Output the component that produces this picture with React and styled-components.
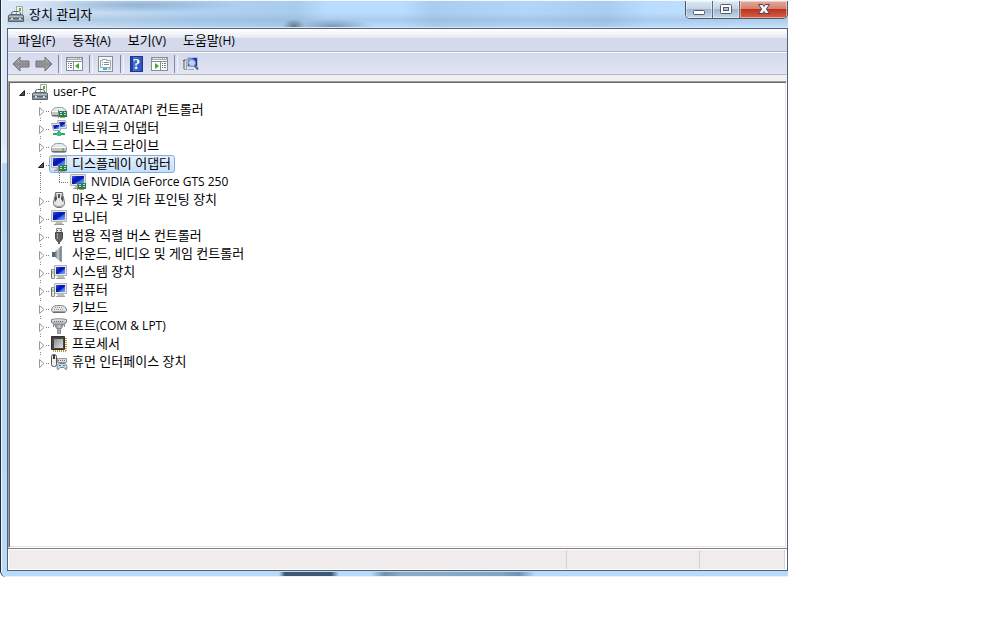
import React, { useState } from 'react';
import styled, { createGlobalStyle } from 'styled-components';

const MENUS = ['파일(F)', '동작(A)', '보기(V)', '도움말(H)'];

const DEVICES = [
    { id: 'ide', name: 'IDE ATA/ATAPI 컨트롤러', icon: 'ide' },
    { id: 'network', name: '네트워크 어댑터', icon: 'network' },
    { id: 'disk', name: '디스크 드라이브', icon: 'disk' },
    {
        id: 'display',
        name: '디스플레이 어댑터',
        icon: 'display',
        children: [{ id: 'gts250', name: 'NVIDIA GeForce GTS 250', icon: 'display' }],
    },
    { id: 'mouse', name: '마우스 및 기타 포인팅 장치', icon: 'mouse' },
    { id: 'monitor', name: '모니터', icon: 'monitor' },
    { id: 'usb', name: '범용 직렬 버스 컨트롤러', icon: 'usb' },
    { id: 'sound', name: '사운드, 비디오 및 게임 컨트롤러', icon: 'sound' },
    { id: 'system', name: '시스템 장치', icon: 'computer' },
    { id: 'computer', name: '컴퓨터', icon: 'computer' },
    { id: 'keyboard', name: '키보드', icon: 'keyboard' },
    { id: 'port', name: '포트(COM & LPT)', icon: 'port' },
    { id: 'cpu', name: '프로세서', icon: 'cpu' },
    { id: 'hid', name: '휴먼 인터페이스 장치', icon: 'hid' },
];

export default function App() {
    const [open, setOpen] = useState({ root: true, display: true });
    const [selected, setSelected] = useState('display');

    function toggle(id) {
        setOpen({ ...open, [id]: !open[id] });
    }

    return (
        <>
            <GlobalStyle />
            <Gradients />
            <Window>
                <TitleBar>
                    <DeviceIcon name="root" />
                    <h1>장치 관리자</h1>
                    <WindowButtons />
                </TitleBar>
                <Client>
                    <MenuBar>
                        {MENUS.map(menu => <button key={menu}><Text>{menu}</Text></button>)}
                    </MenuBar>
                    <Toolbar />
                    <TreePane>
                        <TreeList>
                            <li>
                                <Row>
                                    <Toggle open={open.root} onClick={() => toggle('root')} />
                                    <Item id="root" icon="root" name="user-PC" selected={selected} onSelect={setSelected} />
                                </Row>
                                {open.root && (
                                    <TreeList $nested>
                                        {DEVICES.map((device, i) => (
                                            <li key={device.id}>
                                                <Row>
                                                    <Toggle
                                                        open={open[device.id]}
                                                        line
                                                        last={i === DEVICES.length - 1}
                                                        onClick={() => toggle(device.id)}
                                                    />
                                                    <Item {...device} selected={selected} onSelect={setSelected} />
                                                </Row>
                                                {device.children && open[device.id] && (
                                                    <Branch>
                                                        <BranchLine />
                                                        <TreeList>
                                                            {device.children.map(child => (
                                                                <li key={child.id}>
                                                                    <Row>
                                                                        <Connector />
                                                                        <Item
                                                                            {...child}
                                                                            selected={selected}
                                                                            onSelect={setSelected}
                                                                        />
                                                                    </Row>
                                                                </li>
                                                            ))}
                                                        </TreeList>
                                                    </Branch>
                                                )}
                                            </li>
                                        ))}
                                    </TreeList>
                                )}
                            </li>
                        </TreeList>
                    </TreePane>
                    <StatusBar>
                        <div />
                        <div />
                        <div />
                    </StatusBar>
                </Client>
            </Window>
        </>
    );
}

function Item({ id, icon, name, selected, onSelect }) {
    return (
        <Label $selected={selected === id} onClick={() => onSelect(id)}>
            <DeviceIcon name={icon} />
            <Text>{name}</Text>
        </Label>
    );
}

// latin runs are set one size smaller than the hangul around them
function Text({ children }) {
    const parts = children.split(/([\x21-\x7e]+(?: [\x21-\x7e]+)*)/);

    return (
        <Caption>
            {parts.map((part, i) => i % 2 ? <Latin key={i}>{part}</Latin> : part)}
        </Caption>
    );
}

function WindowButtons() {
    return (
        <Controls>
            <ControlButton aria-label="최소화">
                <svg width="14" height="12" viewBox="0 0 14 12">
                    <rect x="1.5" y="6.5" width="11" height="4" rx="1" fill="#fff" stroke="#535a6b" />
                </svg>
            </ControlButton>
            <ControlButton aria-label="최대화">
                <svg width="14" height="12" viewBox="0 0 14 12">
                    <rect x="1.5" y=".5" width="11" height="9" rx="1" fill="#fff" stroke="#535a6b" />
                    <rect x="4.5" y="3.5" width="5" height="3" fill="#b6c6da" stroke="#535a6b" />
                </svg>
            </ControlButton>
            <ControlButton $close aria-label="닫기">
                <svg width="14" height="12" viewBox="0 0 14 12">
                    <path
                        d="M1.5.5h4L7 2.400 8.500.5h4L9.400 5l3.100 4.500h-4L7 7.600 5.500 9.500h-4L4.600 5z"
                        fill="#f4f4f6"
                        stroke="#4d4254"
                        strokeLinejoin="round"
                    />
                </svg>
            </ControlButton>
        </Controls>
    );
}

function Toolbar() {
    return (
        <ToolbarRow>
            <ToolButton aria-label="뒤로">
                <svg width="18" height="16" viewBox="0 0 18 16">
                    <path d="M1 8l7-7v4h9v6H8v4z" fill="url(#arrow)" stroke="#6f7072" strokeLinejoin="round" />
                </svg>
            </ToolButton>
            <ToolButton aria-label="앞으로">
                <svg width="18" height="16" viewBox="0 0 18 16">
                    <path d="M17 8l-7-7v4H1v6h9v4z" fill="url(#arrow)" stroke="#6f7072" strokeLinejoin="round" />
                </svg>
            </ToolButton>
            <Separator />
            <ToolButton aria-label="콘솔 트리 표시/숨기기">
                <PanelIcon />
            </ToolButton>
            <Separator />
            <ToolButton aria-label="속성">
                <svg width="16" height="16" viewBox="0 0 16 16">
                    <rect x=".5" y=".5" width="14" height="15" fill="#f4f4f4" stroke="#8f8f8f" />
                    <path d="M2.500 4.500h2v-1h4v1h4v7h-10z" fill="#fff" stroke="#9aa3ad" />
                    <path d="M4 6.500h1M4 8.500h1M6 6.500h5M6 8.500h5" stroke="#7c90a5" />
                    <path d="M5 13h4" stroke="#22c3ea" strokeWidth="2" />
                    <path d="M10 13h3" stroke="#c2c2c2" strokeWidth="2" />
                </svg>
            </ToolButton>
            <Separator />
            <ToolButton aria-label="도움말">
                <HelpMark>?</HelpMark>
            </ToolButton>
            <ToolButton aria-label="작업 창 표시/숨기기">
                <PanelIcon right />
            </ToolButton>
            <Separator />
            <ToolButton aria-label="하드웨어 변경 사항 검색">
                <svg width="17" height="16" viewBox="0 0 17 16">
                    <path d="M1.500 5v8" stroke="#9b9b9b" />
                    <rect x="2.500" y="3.500" width="2" height="10" fill="#e2e2e2" stroke="#a2a2a2" />
                    <path d="M1 4.500h2" stroke="#4a4a4a" />
                    <rect x="5.500" y="1.500" width="10" height="9" fill="#1434c8" stroke="#b8bcc4" />
                    <path d="M6 2h5L7 8H6z" fill="#6f92f2" />
                    <path d="M6 13.500h6" stroke="#a8a8a8" />
                    <circle cx="10" cy="7" r="3.500" fill="#d5ecfb" fillOpacity=".85" stroke="#6c8fae" />
                    <path d="M12.500 9.500l3.500 4" stroke="#5d6a7c" strokeWidth="2" />
                </svg>
            </ToolButton>
        </ToolbarRow>
    );
}

function PanelIcon({ right }) {
    return (
        <svg width="17" height="15" viewBox="0 0 17 15">
            <rect x=".5" y="1.5" width="16" height="13" fill="#fff" stroke="#8a8d91" />
            <path d="M1 3h15" stroke="#a9acb0" strokeWidth="2" />
            <path d="M2 2.5h9" stroke="#dfe1e4" />
            <path d="M12 2.5h1M14 2.5h1" stroke="#fff" />
            <path d="M1 5.5h15" stroke="#8a8d91" />
            {right ? (
                <>
                    <path d="M9.5 6v8" stroke="#8a8d91" />
                    <path d="M11 7.5h1M13 7.5h2M11 9.5h1M13 9.5h2M11 11.5h1M13 11.5h2" stroke="#66788c" />
                    <path d="M4 7v6l4-3z" fill="#43a52c" />
                </>
            ) : (
                <>
                    <path d="M7.5 6v8" stroke="#8a8d91" />
                    <path d="M2 7.5h1M4 7.5h2M2 9.5h1M4 9.5h2M2 11.5h1M4 11.5h2" stroke="#66788c" />
                    <path d="M13 7v6l-4-3z" fill="#43a52c" />
                </>
            )}
        </svg>
    );
}

function Toggle({ open, line, last, onClick }) {
    return (
        <ToggleButton onClick={onClick} aria-expanded={!!open} aria-label={open ? '축소' : '확장'}>
            <svg width="18" height="18" viewBox="0 0 18 18">
                {line && <path d={last ? 'M9.5 1v2' : 'M9.5 1v2M9.5 17v1'} stroke="#8b8b8b" strokeDasharray="1 1" />}
                <path d="M15 10.5h3" stroke="#7d7d7d" strokeDasharray="1 1" />
                {open
                    ? <path d="M12.5 7.5v5h-5z" fill="#505050" stroke="#262626" strokeLinejoin="round" />
                    : <path d="M8.500 6.500v8l4.500-4z" fill="#fff" stroke="#989898" />}
            </svg>
        </ToggleButton>
    );
}

function Connector() {
    return (
        <svg width="18" height="18" viewBox="0 0 18 18">
            <path d="M9.5 0v10M9 9.5h9" stroke="#7d7d7d" strokeDasharray="1 1" fill="none" />
        </svg>
    );
}

function Gradients() {
    return (
        <Defs aria-hidden="true">
            <defs>
                <linearGradient id="arrow" x1="0" y1="0" x2="0" y2="1">
                    <stop offset="0" stopColor="#c4c4c4" />
                    <stop offset=".5" stopColor="#8b8b8b" />
                    <stop offset="1" stopColor="#b5b5b5" />
                </linearGradient>
                <linearGradient id="screen" x1="0" y1="0" x2="1" y2="1">
                    <stop offset="0" stopColor="#3d5fe6" />
                    <stop offset=".3" stopColor="#0a1cc4" />
                    <stop offset=".55" stopColor="#0a18ae" />
                    <stop offset=".65" stopColor="#3a68e8" />
                    <stop offset="1" stopColor="#7fb0fa" />
                </linearGradient>
                <linearGradient id="metal" x1="0" y1="0" x2="0" y2="1">
                    <stop offset="0" stopColor="#f4f4f4" />
                    <stop offset="1" stopColor="#9c9c9c" />
                </linearGradient>
                <linearGradient id="chip" x1="0" y1="0" x2="1" y2="1">
                    <stop offset="0" stopColor="#8e8e8e" />
                    <stop offset="1" stopColor="#dedede" />
                </linearGradient>
                <linearGradient id="cone" x1="0" y1="0" x2="1" y2="0">
                    <stop offset="0" stopColor="#63707c" />
                    <stop offset=".5" stopColor="#c3ccd3" />
                    <stop offset="1" stopColor="#6d7984" />
                </linearGradient>
            </defs>
        </Defs>
    );
}

function Drive() {
    return (
        <>
            <path d="M1.500 10.500c1-2 3-4 5-4h5c2 0 4 2 5 4v3c0 1-1 2-2 2h-11c-1 0-2-1-2-2z" fill="#e9e9e9" stroke="#9b9b9b" />
            <path d="M2 10.500h14" stroke="#fff" />
            <path d="M2 11h14v3H2z" fill="#c4c4c4" />
            <path d="M2 14.500h14" stroke="#6b6b6b" />
            <path d="M12 12.500h2" stroke="#2fc437" strokeWidth="2" />
        </>
    );
}

function Screen() {
    return (
        <>
            <path d="M7 12h4l2 3H5z" fill="#b9b9b9" />
            <path d="M4 15.500h10" stroke="#999" />
            <path d="M1.500 1.500h15v11h-15z" fill="#e4e4e0" stroke="#b5b5b0" strokeLinejoin="round" />
            <path d="M3 3h12v8H3z" fill="url(#screen)" />
        </>
    );
}

function Card() {
    return (
        <>
            <path d="M9 10h8v6H9z" fill="#2b7d57" />
            <path d="M10 11.5h2M14 11.5h2M10 13.5h2M14 13.500h2" stroke="#b6e3c4" />
            <path d="M10 16.5h5" stroke="#c9a332" />
            <path d="M8.5 9v8" stroke="#7a8a80" />
        </>
    );
}

const drawings = {
    root: (
        <>
            <path d="M9.500 1.500h6v8h-6z" fill="#f3f3f3" stroke="#a5a5a5" />
            <path d="M12 3h2v3h-2z" fill="#54b03a" />
            <path d="M4.500 9c0-2 1-2.500 2-2.500h5c1 0 2 .500 2 2.500" fill="none" stroke="#5c666e" />
            <path d="M1.500 10.500l2-1h11l2 1v6h-15z" fill="#87929a" stroke="#58636b" strokeLinejoin="round" />
            <path d="M2 11.500h14" stroke="#b4bec5" />
            <path d="M2 13.500h14" stroke="#5b666e" />
            <path d="M4 13h2v2H4zM12 13h2v2h-2z" fill="#d2d7da" />
        </>
    ),
    ide: <><Drive /><Card /></>,
    disk: <Drive />,
    network: (
        <>
            <path d="M7.500 1.500h8l1 8h-8z" fill="#dfe3ea" stroke="#a9aeb8" />
            <path d="M9 3h6v5H9z" fill="url(#screen)" />
            <path d="M1.500 4.500h8l1 7h-7z" fill="#e6e9ee" stroke="#a9aeb8" />
            <path d="M3 6h6v4H4z" fill="url(#screen)" />
            <path d="M9 12v3M3 15h12" stroke="#2aa869" strokeWidth="2" />
            <path d="M7 13h4v4H7z" fill="#39bd7b" />
        </>
    ),
    display: <><Screen /><Card /></>,
    monitor: <Screen />,
    mouse: (
        <>
            <path d="M5.500 1.500h7c0 4 2 7 2 11-.500 3-2.500 4-5.500 4s-5-1-5.500-4c0-4 2-7 2-11z" fill="#e6e6e6" stroke="#6b6b6b" />
            <path d="M6 2l1 6-2 3c-1-3 1-6 1-9zM12 2l-1 6 2 3c1-3-1-6-1-9z" fill="#4a4a4a" />
            <path d="M9 3v4" stroke="#555" strokeWidth="2" />
            <path d="M5 14c2 2 6 2 8 0" stroke="#9b9b9b" fill="none" />
        </>
    ),
    usb: (
        <>
            <path d="M6.500 1.500h5v4h-5z" fill="#e1e1e1" stroke="#8b8b8b" />
            <path d="M7 3.500h1M10 3.500h1" stroke="#555" />
            <path d="M5.500 5.500h7v6l-2 3h-3l-2-3z" fill="#626262" stroke="#474747" />
            <path d="M7.500 6v6" stroke="#9c9c9c" />
            <path d="M9 14v3" stroke="#5d5d5d" strokeWidth="2" />
        </>
    ),
    sound: (
        <>
            <path d="M2 7h4v5H2z" fill="#596672" />
            <path d="M5 7l6-6v16l-6-5z" fill="url(#cone)" />
            <path d="M11.500 1v16" stroke="#8e989f" />
        </>
    ),
    computer: (
        <>
            <path d="M8 12h5l2 3H7z" fill="#bdbdbd" />
            <path d="M6 15.500h9" stroke="#a2a2a2" />
            <path d="M4.500 2.500h12v10h-12z" fill="#e8e8e8" stroke="#b3b3b3" />
            <path d="M6 4h9v7H6z" fill="url(#screen)" />
            <path d="M1.500 6.500h3v9h-3z" fill="#e2e6e2" stroke="#8f938f" />
            <path d="M3 8v3" stroke="#41c94a" />
            <path d="M1.500 7v8" stroke="#6b6f6b" />
        </>
    ),
    keyboard: (
        <>
            <path d="M1.500 11c0-3 3-4.500 5-4.500h5c2 0 5 1.500 5 4.500 0 1-1 2.500-2 2.500h-11c-1 0-2-1.500-2-2.500z" fill="#e2e2e2" stroke="#858585" />
            <path d="M5 8.500h8M4 10.500h10" stroke="#9a9a9a" strokeDasharray="1 1" />
            <path d="M3 13h12" stroke="#55555c" />
        </>
    ),
    port: (
        <>
            <path d="M1.500 2.500c5-1 10-1 15 0v3l-3 2h-9l-3-2z" fill="url(#metal)" stroke="#7c858b" strokeLinejoin="round" />
            <path d="M4 4.500h10" stroke="#5e666c" strokeDasharray="1 1" />
            <path d="M4.500 7.500h9l-2 4h-5z" fill="url(#cone)" stroke="#8a9399" />
            <path d="M3.500 7v3M14.500 7v3" stroke="#8a9399" />
            <path d="M7.500 11.500h3v5h-3z" fill="#aab1b6" stroke="#858d92" />
        </>
    ),
    cpu: (
        <>
            <path d="M16 3v13M3 16h13" stroke="#c7952e" strokeWidth="2" strokeDasharray="1 1" />
            <path d="M1.500 1.500h13v13h-13z" fill="#454545" stroke="#303030" />
            <path d="M4 4h9v9H4z" fill="url(#chip)" />
        </>
    ),
    hid: (
        <>
            <rect x="1.500" y="1.500" width="5" height="12" rx="2" fill="#eee" stroke="#555" />
            <path d="M4 2v4" stroke="#333" strokeWidth="2" />
            <path d="M7.500 5.500h9v4h-9z" fill="#d8d8d8" stroke="#999" />
            <path d="M8 7.500h8" stroke="#777" strokeDasharray="1 1" />
            <path d="M7.500 16.500c-1-3 0-6 2-6h5c2 0 3 3 2 6-2 0-2-2-3-2h-3c-1 0-1 2-3 2z" fill="#c6dbe6" stroke="#6d7f8a" />
            <path d="M9 12.500h2M13 12.500h2" stroke="#2a83c7" />
        </>
    ),
};

function DeviceIcon({ name }) {
    return (
        <svg width="18" height="18" viewBox="0 0 18 18" aria-hidden="true">
            {drawings[name]}
        </svg>
    );
}

const GlobalStyle = createGlobalStyle`
    * {
        box-sizing: border-box;
    }

    body {
        margin: 0;
        background: #fff;
        color: #000;
        font-family: 'Open Sans', 'Noto Sans CJK KR', sans-serif;
        font-size: 13px;
    }

    button {
        margin: 0;
        padding: 0;
        border: none;
        background: none;
        color: inherit;
        font: inherit;
    }

    svg {
        display: block;
        flex: none;
    }
`

const Caption = styled.span`
    padding-bottom: 2px;
`

const Latin = styled.span`
    font-size: 12px;
`

const Defs = styled.svg`
    position: absolute;
    width: 0;
    height: 0;
`

/* glass frame, with the blurred page behind it showing through the edges */
const Window = styled.div`
    display: flex;
    flex-direction: column;
    min-height: calc(100vh - 53px);
    margin-right: 220px;
    padding: 0 0 6px 6px;
    border-left: 1px solid #232a35;
    border-bottom-left-radius: 6px;
    background:
        linear-gradient(#e6f2fd, #e6f2fd) left bottom / 100% 1px no-repeat,
        linear-gradient(90deg, transparent 278px, #3d5872 284px, #3d5872 330px, transparent 338px) left bottom / 100% 5px no-repeat,
        linear-gradient(90deg, transparent 370px, #6d8faa 384px, #8cacc9 400px, #83a5c4 500px, #6f92b3 518px, transparent 534px) left bottom / 100% 5px no-repeat,
        linear-gradient(90deg, #f3f8fe 1px, transparent 1px),
        linear-gradient(180deg, #d9e9fa 140px, #e4f0fc 162px, #b4d6f9 164px, #b8dafb 560px, #b8dafb);
`

const TitleBar = styled.header`
    display: flex;
    align-items: center;
    gap: 4px;
    height: 28px;
    border-top: 1px solid #f2f8fe;
    border-bottom: 1px solid #d3e8fb;
    background:
        radial-gradient(ellipse 11px 7px at 287px 25px, #5f7b88, transparent),
        radial-gradient(ellipse 40px 7px at 326px 25px, #7d9ab8, transparent),
        radial-gradient(ellipse 100px 8px at 130px 4px, rgba(110, 143, 178, 0.5), transparent),
        linear-gradient(180deg, transparent 12px, rgba(130, 160, 190, 0.3) 19px, transparent 26px),
        linear-gradient(90deg, #dbe8f5, #c8def4 80px, #b1d2f2 180px, #a9cbec 290px, #badcff 320px, #badcff 395px, #aacdef 425px, #b2d5f8 520px, #a9ccef 600px, #badcff 640px, #c4e0fa);

    h1 {
        flex: 1;
        margin: 0;
        font-size: 13px;
        font-weight: 400;
        line-height: 20px;
    }
`

const Controls = styled.div`
    display: flex;
    align-self: flex-start;
    height: 18px;
    border: 1px solid #4d5868;
    border-top: none;
    border-radius: 0 0 5px 5px;
    overflow: hidden;
`

const ControlButton = styled.button`
    display: flex;
    align-items: center;
    justify-content: center;
    width: ${props => props.$close ? '47px' : '27px'};
    border-right: ${props => props.$close ? 'none' : '1px solid #5f6b7c'};
    background: ${props => props.$close
        ? 'linear-gradient(180deg, #e5a99c 0, #d4806f 8px, #bb3219 8px, #d6604a 17px)'
        : 'linear-gradient(180deg, #dce7f3 0, #c4d3e4 8px, #9fb4cc 8px, #c3d8ee 17px)'};
    box-shadow: inset 0 0 0 1px rgba(255, 255, 255, 0.45);
`

const Client = styled.main`
    display: flex;
    flex: 1;
    flex-direction: column;
    border: 1px solid #566072;
    background: #f0f0f0;
`

const MenuBar = styled.nav`
    display: flex;
    gap: 1px;
    height: 23px;
    padding-left: 2px;
    border-bottom: 1px solid #b1b5c8;
    background: linear-gradient(180deg, #fff 0, #e6eaf4 9px, #d4d9ec 9px);

    button {
        padding: 0 8px;
        line-height: 22px;
    }
`

const ToolbarRow = styled.div`
    display: flex;
    align-items: center;
    height: 23px;
    padding-left: 1px;
    border-top: 1px solid #fafbfe;
    border-bottom: 1px solid #b4b9cf;
    background: linear-gradient(180deg, #d4d9ec, #e1e5f4);
`

const ToolButton = styled.button`
    display: flex;
    align-items: center;
    justify-content: center;
    width: 23px;
    height: 21px;
`

const Separator = styled.span`
    width: 8px;
    height: 18px;
    padding-left: 3px;

    &::before {
        content: '';
        display: block;
        width: 2px;
        height: 100%;
        border-left: 1px solid #858a99;
        border-right: 1px solid #f2f4fa;
    }
`

const HelpMark = styled.span`
    width: 13px;
    height: 16px;
    border: 1px solid #1c3a94;
    background: linear-gradient(90deg, #24419f 2px, #4a72d8 2px, #2c50bd);
    color: #fff;
    font-family: 'Liberation Serif', serif;
    font-size: 15px;
    font-weight: 700;
    line-height: 14px;
`

const TreePane = styled.section`
    flex: 1;
    margin-top: 6px;
    padding: 1px 1px 1px 3px;
    border: 1px solid;
    border-color: #a0a0a0 #fff #fff #a0a0a0;
    background: #fff;
    box-shadow: inset 1px 1px 0 #696969, inset -1px -1px 0 #e3e3e3;
`

const TreeList = styled.ul`
    margin: 0;
    padding: 0 0 0 ${props => props.$nested ? '19px' : '0'};
    list-style: none;
`

const Row = styled.div`
    display: flex;
    height: 18px;
`

const Branch = styled.div`
    display: flex;
`

const BranchLine = styled.span`
    width: 19px;
    padding-left: 9px;

    &::before {
        content: '';
        display: block;
        width: 1px;
        height: 100%;
        background: repeating-linear-gradient(180deg, #7d7d7d 0 1px, transparent 1px 2px);
    }
`

const ToggleButton = styled.button`
    width: 18px;
    height: 18px;
`

const Label = styled.button`
    display: flex;
    align-items: center;
    gap: 4px;
    height: 18px;
    padding-right: 3px;
    border: 1px solid ${props => props.$selected ? '#84acdd' : 'transparent'};
    border-radius: 3px;
    background: ${props => props.$selected ? 'linear-gradient(180deg, #e6f1fd, #c4dffb)' : 'none'};
    line-height: 16px;
    white-space: nowrap;
`

const StatusBar = styled.footer`
    display: grid;
    grid-template-columns: 1fr 133px 85px;
    height: 22px;
    padding: 1px 2px 1px 1px;
    border-top: 1px solid #7e7e82;
    background: #fff;

    div {
        border-right: 1px solid #d0d2d4;
        background: #f0ecec;
    }
`
